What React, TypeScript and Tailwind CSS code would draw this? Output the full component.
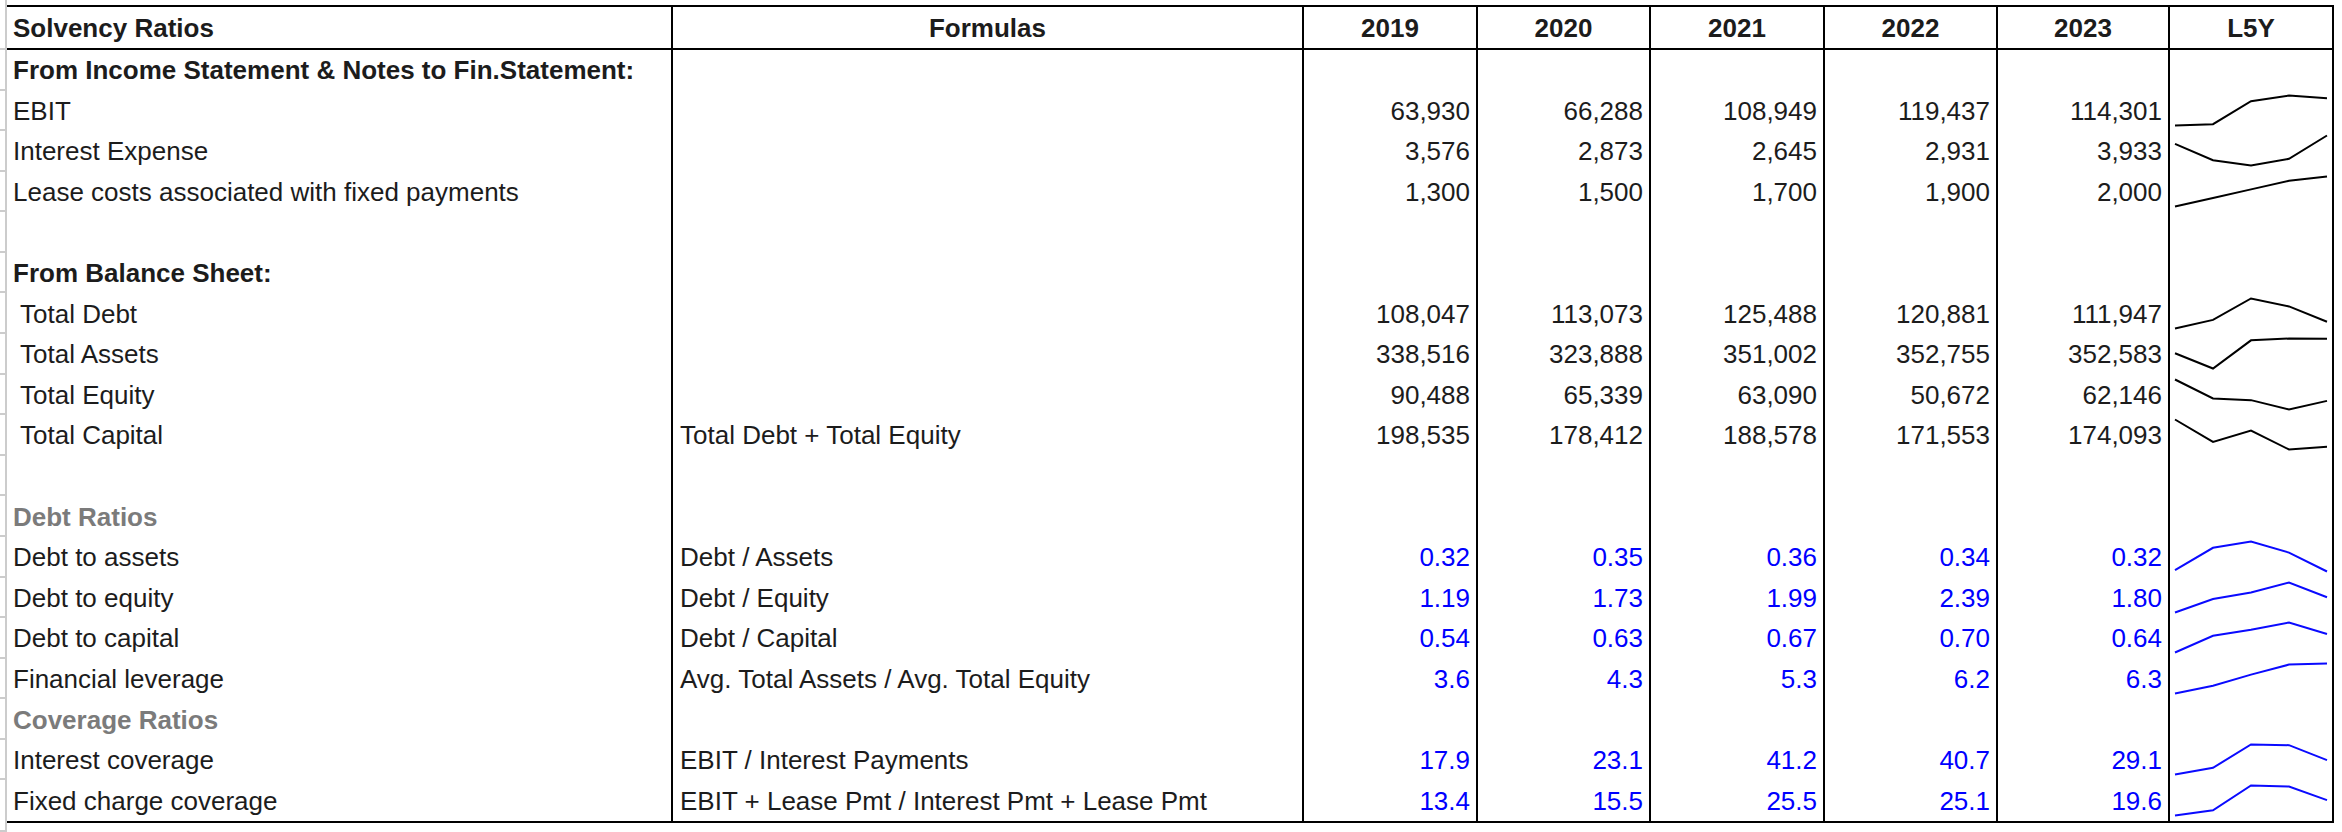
// Solvency ratios sheet

type Row = {
  label: string;
  kind?: "section" | "group" | "blank";
  indent?: boolean;
  formula?: string;
  values?: string[];
  spark?: number[];
  blue?: boolean;
};

const YEARS = ["2019", "2020", "2021", "2022", "2023"];

// column widths incl. the 2px right border
const COLS = ["w-[666px]", "w-[631px]", "w-[174px]", "w-[173px]", "w-[174px]", "w-[173px]", "w-[172px]", "w-[164px]"];

const rows: Row[] = [
  { label: "From Income Statement & Notes to Fin.Statement:", kind: "section" },
  { label: "EBIT", values: ["63,930", "66,288", "108,949", "119,437", "114,301"] },
  { label: "Interest Expense", values: ["3,576", "2,873", "2,645", "2,931", "3,933"] },
  { label: "Lease costs associated with fixed payments", values: ["1,300", "1,500", "1,700", "1,900", "2,000"] },
  { label: "", kind: "blank" },
  { label: "From Balance Sheet:", kind: "section" },
  { label: "Total Debt", indent: true, values: ["108,047", "113,073", "125,488", "120,881", "111,947"] },
  { label: "Total Assets", indent: true, values: ["338,516", "323,888", "351,002", "352,755", "352,583"] },
  { label: "Total Equity", indent: true, values: ["90,488", "65,339", "63,090", "50,672", "62,146"] },
  {
    label: "Total Capital",
    indent: true,
    formula: "Total Debt + Total Equity",
    values: ["198,535", "178,412", "188,578", "171,553", "174,093"],
  },
  { label: "", kind: "blank" },
  { label: "Debt Ratios", kind: "group" },
  {
    label: "Debt to assets",
    formula: "Debt / Assets",
    blue: true,
    values: ["0.32", "0.35", "0.36", "0.34", "0.32"],
    spark: [0.3192, 0.3491, 0.3575, 0.3427, 0.3175],
  },
  {
    label: "Debt to equity",
    formula: "Debt / Equity",
    blue: true,
    values: ["1.19", "1.73", "1.99", "2.39", "1.80"],
    spark: [1.194, 1.7306, 1.989, 2.3855, 1.8013],
  },
  {
    label: "Debt to capital",
    formula: "Debt / Capital",
    blue: true,
    values: ["0.54", "0.63", "0.67", "0.70", "0.64"],
    spark: [0.5442, 0.6338, 0.6654, 0.7046, 0.643],
  },
  {
    label: "Financial leverage",
    formula: "Avg. Total Assets / Avg. Total Equity",
    blue: true,
    values: ["3.6", "4.3", "5.3", "6.2", "6.3"],
  },
  { label: "Coverage Ratios", kind: "group" },
  {
    label: "Interest coverage",
    formula: "EBIT / Interest Payments",
    blue: true,
    values: ["17.9", "23.1", "41.2", "40.7", "29.1"],
  },
  {
    label: "Fixed charge coverage",
    formula: "EBIT + Lease Pmt / Interest Pmt + Lease Pmt",
    blue: true,
    values: ["13.4", "15.5", "25.5", "25.1", "19.6"],
  },
];

const Spark = ({ values, color }: { values: number[]; color: string }) => {
  const min = Math.min(...values);
  const max = Math.max(...values);
  const pts = values
    .map((v, i) => {
      const n = max === min ? 0.5 : (v - min) / (max - min);
      return `${5 + i * 38},${4.5 + (1 - n) * 30}`;
    })
    .join(" ");
  return (
    <svg width="162" height="40" className="block overflow-visible">
      <polyline points={pts} fill="none" stroke={color} strokeWidth={2} strokeLinejoin="miter" />
    </svg>
  );
};

const Gutter = ({ tick, h }: { tick: boolean; h: string }) => (
  <div className={`w-[7px] shrink-0 border-r-2 border-[#cccccc] ${h} ${tick ? "border-b-2" : ""}`} />
);

const App = () => {
  return (
    <div className="w-[2342px] h-[832px] bg-white text-[#1c1c1c] font-['Liberation_Sans',Arial,sans-serif] text-[26px] leading-none overflow-hidden">
      {/* spacer above the table */}
      <div className="flex h-[5px]">
        <Gutter tick={false} h="h-[5px]" />
      </div>

      {/* header */}
      <div className="flex h-[45px]">
        <Gutter tick={true} h="h-[45px]" />
        <div className="flex border-y-2 border-black font-bold">
          <div className={`${COLS[0]} flex items-center pl-[6px] border-r-2 border-black`}>Solvency Ratios</div>
          <div className={`${COLS[1]} flex items-center justify-center border-r-2 border-black`}>Formulas</div>
          {YEARS.map((y, i) => (
            <div key={y} className={`${COLS[i + 2]} flex items-center justify-center border-r-2 border-black`}>
              {y}
            </div>
          ))}
          <div className={`${COLS[7]} flex items-center justify-center border-r-2 border-black`}>L5Y</div>
        </div>
      </div>

      {/* body */}
      {rows.map((r, idx) => {
        const last = idx === rows.length - 1;
        const sparkVals = r.spark ?? r.values?.map((v) => parseFloat(v.replace(/,/g, "")));
        return (
          <div key={idx} className={`flex ${last ? "h-[42.58px]" : "h-[40.58px]"}`}>
            <Gutter tick={!last} h={last ? "h-[42.58px]" : "h-[40.58px]"} />
            <div className={`flex ${last ? "border-b-2 border-black" : ""}`}>
              <div
                className={`${COLS[0]} flex items-center border-r-2 border-black ${
                  r.indent ? "pl-[13px]" : "pl-[6px]"
                } ${r.kind === "section" ? "font-bold" : ""} ${r.kind === "group" ? "font-bold text-[#7b7b7b]" : ""}`}
              >
                {r.label}
              </div>
              <div className={`${COLS[1]} flex items-center pl-[7px] border-r-2 border-black`}>{r.formula}</div>
              {YEARS.map((y, i) => (
                <div
                  key={y}
                  className={`${COLS[i + 2]} flex items-center justify-end pr-[6px] border-r-2 border-black ${
                    r.blue ? "text-[#0000ff]" : ""
                  }`}
                >
                  {r.values?.[i]}
                </div>
              ))}
              <div className={`${COLS[7]} flex items-center border-r-2 border-black`}>
                {sparkVals && <Spark values={sparkVals} color={r.blue ? "#0a0aff" : "#000000"} />}
              </div>
            </div>
          </div>
        );
      })}

      {/* spacer under the table */}
      <div className="flex h-[9px]">
        <Gutter tick={true} h="h-[9px]" />
      </div>
    </div>
  );
};

export default App;
